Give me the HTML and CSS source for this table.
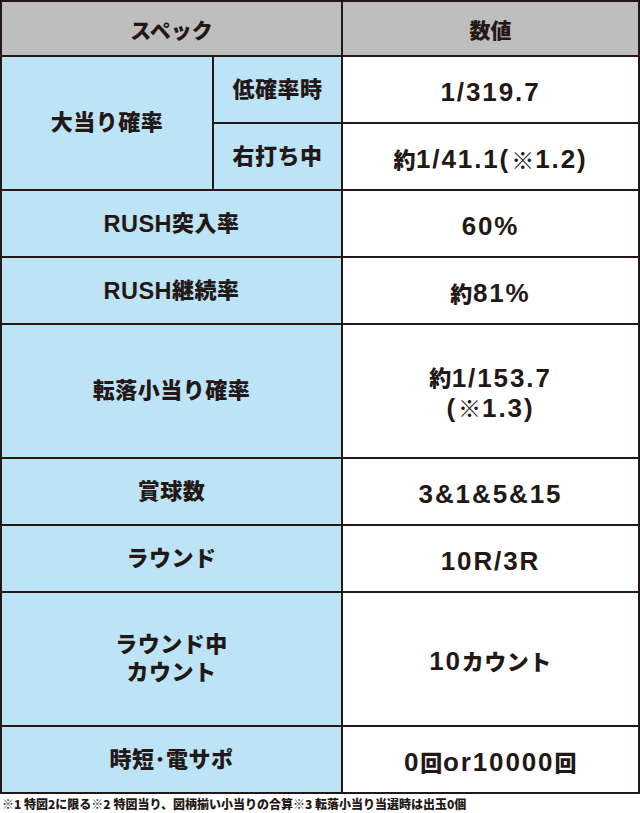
FILE: index.html
```html
<!DOCTYPE html>
<html lang="ja">
<head>
<meta charset="utf-8">
<title>スペック</title>
<link rel="stylesheet" href="styles.css">
</head>
<body>
<div class="spec">
  <div class="cell head span2">スペック</div>
  <div class="cell head">数値</div>

  <div class="cell label tall">大当り確率</div>
  <div class="cell label">低確率時</div>
  <div class="cell value">1/319.7</div>
  <div class="cell label">右打ち中</div>
  <div class="cell value"><span class="jp">約</span>1/41.1(<span class="mark">※</span>1.2)</div>

  <div class="cell label span2"><span class="en">RUSH</span>突入率</div>
  <div class="cell value">60%</div>

  <div class="cell label span2"><span class="en">RUSH</span>継続率</div>
  <div class="cell value"><span class="jp">約</span>81%</div>

  <div class="cell label span2 dbl">転落小当り確率</div>
  <div class="cell value dbl stack">
    <div class="line"><span class="jp">約</span>1/153.7</div>
    <div class="line">(<span class="mark">※</span>1.3)</div>
  </div>

  <div class="cell label span2">賞球数</div>
  <div class="cell value">3&amp;1&amp;5&amp;15</div>

  <div class="cell label span2">ラウンド</div>
  <div class="cell value">10R/3R</div>

  <div class="cell label span2 dbl">ラウンド中<br>カウント</div>
  <div class="cell value dbl">10<span class="jp">カウント</span></div>

  <div class="cell label span2">時短･電サポ</div>
  <div class="cell value">0<span class="jp">回</span>or10000<span class="jp">回</span></div>
</div>
<p class="note">※1 特図2に限る※2 特図当り、図柄揃い小当りの合算※3 転落小当り当選時は出玉0個</p>
</body>
</html>
```

FILE: styles.css
```css
html, body {
  margin: 0;
  padding: 0;
  background: #ffffff;
}

body {
  width: 640px;
  font-family: "Liberation Sans", "Noto Sans CJK JP", sans-serif;
  font-weight: 700;
  color: #231815;
}

.spec {
  display: grid;
  grid-template-columns: 210px 127px 295px;
  grid-template-rows: 53px repeat(11, 65px);
  gap: 2px;
  padding: 2px;
  background: #231815;
  width: 636px;
}

.cell {
  display: flex;
  align-items: center;
  justify-content: center;
  text-align: center;
  line-height: 28px;
}

.head {
  background: #bebebe;
  font-size: 21px;
  font-family: "Noto Sans CJK JP", sans-serif;
  font-weight: 900;
}

.label {
  background: #bde3f7;
  font-size: 22px;
  letter-spacing: 0.5px;
  font-weight: 900;
}

.label .en {
  font-size: 23.5px;
  font-weight: 700;
}

.value {
  background: #ffffff;
  font-size: 26px;
  letter-spacing: 1.9px;
  padding-top: 4px;
  box-sizing: border-box;
}

.stack {
  flex-direction: column;
}

.stack .line {
  line-height: 29px;
}

.value .jp {
  font-size: 22px;
  font-family: "Noto Sans CJK JP", sans-serif;
  font-weight: 900;
  letter-spacing: 0.5px;
  position: relative;
  top: -1px;
}

.value .mark {
  font-size: 23px;
  font-family: "Noto Sans CJK JP", sans-serif;
  font-weight: 900;
  letter-spacing: 0;
  margin: 0 1px;
}

.span2 {
  grid-column: span 2;
}

.tall {
  grid-row: span 2;
}

.dbl {
  grid-row: span 2;
}

.note {
  margin: 3px 0 0 2px;
  font-size: 12px;
  line-height: 14px;
  font-family: "Noto Sans CJK JP", sans-serif;
  font-weight: 900;
  white-space: nowrap;
}
```
